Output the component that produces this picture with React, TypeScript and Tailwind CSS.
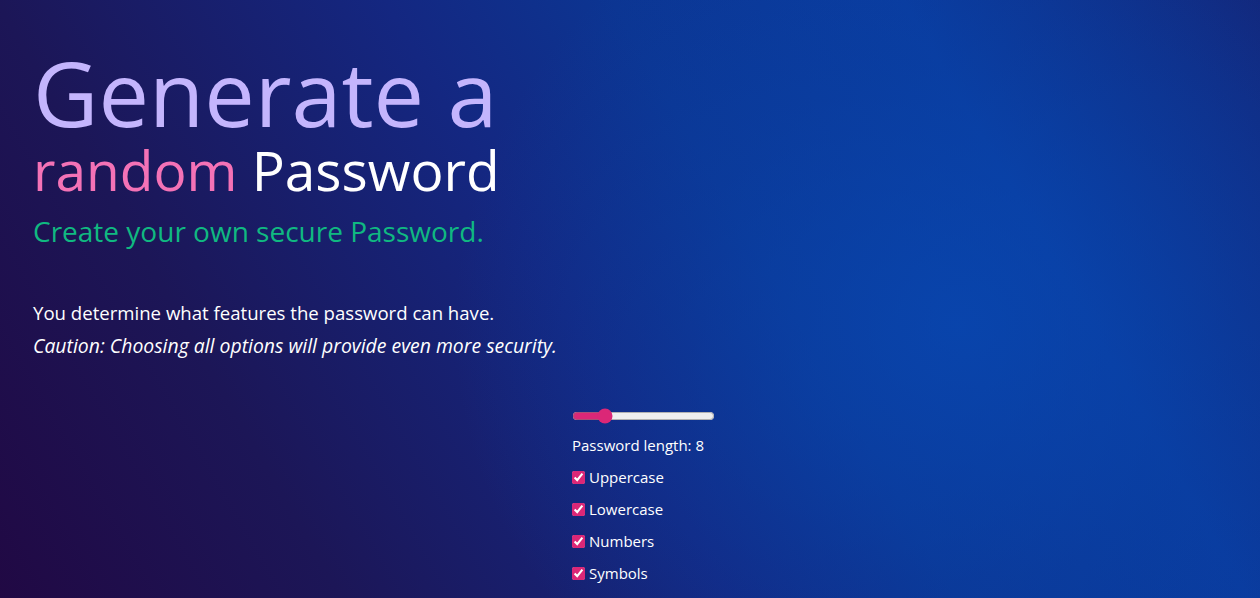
import { useState } from "react";

const options = ["Uppercase", "Lowercase", "Numbers", "Symbols"];

export default function App() {
  const [length, setLength] = useState(8);

  return (
    <main className="min-h-screen w-full bg-[radial-gradient(ellipse_40%_75%_at_76%_52%,rgba(8,72,178,0.75)_0%,rgba(8,68,170,0.35)_55%,rgba(8,68,170,0)_100%),linear-gradient(60deg,#210843_0%,#1c1657_22%,#142781_46%,#0c3592_60%,#0a3b9e_78%,#13277b_100%)] px-[33px] pt-[45px] pb-10 font-['Open_Sans',sans-serif] text-white">
      <h1 className="flex flex-col">
        <span className="text-[90px] leading-[95px] text-[#c4b5fd]">Generate a</span>
        <span className="text-[55px] leading-[60px]">
          <span className="inline-block text-[#f472b6]">random</span> Password
        </span>
      </h1>
      <h2 className="mt-[13px] text-[28px] leading-[36px] text-[#10b981]">
        Create your own secure Password.
      </h2>

      <div className="mt-[50px] flex flex-col gap-[5px] leading-[28px]">
        <p className="text-[18.6px]">You determine what features the password can have.</p>
        <p className="text-[19.4px] italic">Caution: Choosing all options will provide even more security.</p>
      </div>

      <div className="ml-[539px] mt-[48px] flex w-[160px] flex-col text-[15px]">
        <input
          type="range"
          min={4}
          max={24}
          value={length}
          onChange={(e) => setLength(Number(e.target.value))}
          className="m-0 h-4 w-[143px] accent-[#db2777]"
        />
        <span className="mt-[10px] leading-[22px]">Password length: {length}</span>
        <div className="mt-[10px] flex flex-col gap-[10px]">
          {options.map((o) => (
            <label key={o} className="flex items-center gap-[4px] leading-[22px]">
              <input type="checkbox" defaultChecked className="m-0 h-[13px] w-[13px] accent-[#db2777]" />
              {o}
            </label>
          ))}
        </div>
      </div>
    </main>
  );
}
